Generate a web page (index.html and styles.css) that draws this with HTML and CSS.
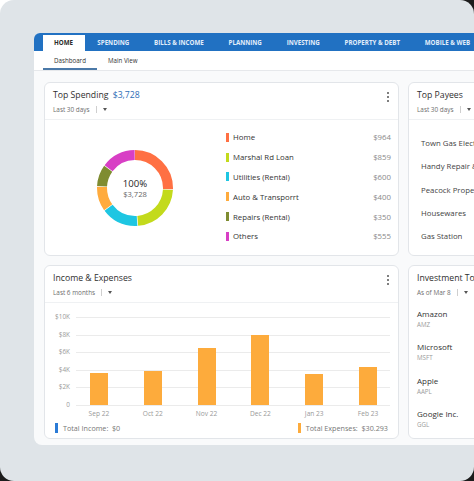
FILE: index.html
```html
<!DOCTYPE html>
<html lang="en">
<head>
<meta charset="utf-8">
<title>Dashboard</title>
<link rel="stylesheet" href="styles.css">
</head>
<body>
<div class="frame">
  <div class="panel">
    <nav class="tabs">
      <span class="tab active">HOME</span>
      <span class="tab">SPENDING</span>
      <span class="tab">BILLS &amp; INCOME</span>
      <span class="tab">PLANNING</span>
      <span class="tab">INVESTING</span>
      <span class="tab">PROPERTY &amp; DEBT</span>
      <span class="tab">MOBILE &amp; WEB</span>
    </nav>
    <div class="subtabs">
      <span class="subtab active">Dashboard</span>
      <span class="subtab">Main View</span>
    </div>
    <div class="grid">
      <section class="card">
        <header class="card-head">
          <div>
            <div class="title">Top Spending <span class="amount">$3,728</span></div>
            <div class="range">Last 30 days<span class="pipe"></span><span class="caret"></span></div>
          </div>
          <span class="kebab"><i></i><i></i><i></i></span>
        </header>
        <div class="spend-body">
          <div class="donut-cell">
            <svg class="donut" width="78" height="78" viewBox="0 0 78 78">
              <g transform="rotate(-90 39 39)" fill="none" stroke-width="10">
                <circle cx="39" cy="39" r="33" stroke="#ff7043" stroke-dasharray="52.9 207.35" stroke-dashoffset="0"/>
                <circle cx="39" cy="39" r="33" stroke="#c3da1c" stroke-dasharray="47.1 207.35" stroke-dashoffset="-53.62"/>
                <circle cx="39" cy="39" r="33" stroke="#1ec6e2" stroke-dasharray="32.7 207.35" stroke-dashoffset="-101.4"/>
                <circle cx="39" cy="39" r="33" stroke="#ffab3d" stroke-dasharray="21.6 207.35" stroke-dashoffset="-134.77"/>
                <circle cx="39" cy="39" r="33" stroke="#7f8c31" stroke-dasharray="18.8 207.35" stroke-dashoffset="-157.02"/>
                <circle cx="39" cy="39" r="33" stroke="#d83fc5" stroke-dasharray="30.2 207.35" stroke-dashoffset="-176.49"/>
              </g>
              <text class="pct" x="39" y="38" text-anchor="middle">100%</text>
              <text class="tot" x="39" y="47.5" text-anchor="middle">$3,728</text>
            </svg>
          </div>
          <ul class="legend">
            <li><i class="sw c-home"></i><span class="lab">Home</span><span class="val">$964</span></li>
            <li><i class="sw c-loan"></i><span class="lab">Marshal Rd Loan</span><span class="val">$859</span></li>
            <li><i class="sw c-util"></i><span class="lab">Utilities (Rental)</span><span class="val">$600</span></li>
            <li><i class="sw c-auto"></i><span class="lab">Auto &amp; Transporrt</span><span class="val">$400</span></li>
            <li><i class="sw c-rep"></i><span class="lab">Repairs (Rental)</span><span class="val">$350</span></li>
            <li><i class="sw c-oth"></i><span class="lab">Others</span><span class="val">$555</span></li>
          </ul>
        </div>
      </section>

      <section class="card">
        <header class="card-head">
          <div>
            <div class="title">Top Payees</div>
            <div class="range">Last 30 days<span class="pipe"></span><span class="caret"></span></div>
          </div>
        </header>
        <ul class="payees">
          <li>Town Gas Electric</li>
          <li>Handy Repair &amp; Co</li>
          <li>Peacock Properties</li>
          <li>Housewares</li>
          <li>Gas Station</li>
        </ul>
      </section>

      <section class="card">
        <header class="card-head">
          <div>
            <div class="title">Income &amp; Expenses</div>
            <div class="range">Last 6 months<span class="pipe"></span><span class="caret"></span></div>
          </div>
          <span class="kebab"><i></i><i></i><i></i></span>
        </header>
        <div class="chart">
          <div class="yaxis">
            <span>$10K</span><span>$8K</span><span>$6K</span><span>$4K</span><span>$2K</span><span>0</span>
          </div>
          <div class="plot">
            <div class="bars">
              <div class="slot"><div class="bar" style="height:36%"></div></div>
              <div class="slot"><div class="bar" style="height:38%"></div></div>
              <div class="slot"><div class="bar" style="height:64.5%"></div></div>
              <div class="slot"><div class="bar" style="height:79.5%"></div></div>
              <div class="slot"><div class="bar" style="height:35%"></div></div>
              <div class="slot"><div class="bar" style="height:43%"></div></div>
            </div>
          </div>
          <div class="xaxis">
            <span>Sep 22</span><span>Oct 22</span><span>Nov 22</span><span>Dec 22</span><span>Jan 23</span><span>Feb 23</span>
          </div>
        </div>
        <div class="chart-legend">
          <span class="key"><i class="kbar income"></i>Total Income:&nbsp; $0</span>
          <span class="key"><i class="kbar expense"></i>Total Expenses:&nbsp; $30.293</span>
        </div>
      </section>

      <section class="card">
        <header class="card-head plain">
          <div>
            <div class="title">Investment Tools</div>
            <div class="range">As of Mar 8<span class="pipe"></span><span class="caret"></span></div>
          </div>
        </header>
        <ul class="stocks">
          <li><span class="name">Amazon</span><span class="tick">AMZ</span></li>
          <li><span class="name">Microsoft</span><span class="tick">MSFT</span></li>
          <li><span class="name">Apple</span><span class="tick">AAPL</span></li>
          <li><span class="name">Google Inc.</span><span class="tick">GGL</span></li>
        </ul>
      </section>
    </div>
  </div>
</div>
</body>
</html>
```

FILE: styles.css
```css
html, body {
  margin: 0;
  padding: 0;
  width: 474px;
  height: 481px;
  overflow: hidden;
}
body {
  background: linear-gradient(to bottom right, #ffffff 0%, #ffffff 10%, #1c1c1c 30%);
  font-family: "Open Sans", "Liberation Sans", sans-serif;
  color: #333;
}
ul { list-style: none; margin: 0; padding: 0; }

.frame {
  width: 474px;
  height: 481px;
  box-sizing: border-box;
  border-radius: 14px;
  background: #dfe4e8;
  overflow: hidden;
  padding: 33px 0 0 34px;
}
.panel {
  width: 520px;
  height: 412px;
  background: #f9fafb;
  border-radius: 6px 0 0 8px;
  overflow: hidden;
}

/* main tabs */
.tabs {
  display: flex;
  align-items: flex-end;
  height: 18px;
  background: #2171c2;
  padding-left: 9px;
  white-space: nowrap;
}
.tab {
  height: 16px;
  line-height: 15px;
  padding: 0 12.4px;
  font-size: 6.2px;
  font-weight: 700;
  color: #e3eefa;
}
.tab.active {
  background: #fff;
  color: #2a2a2a;
  padding: 0 12px 0 11px;
}

/* sub tabs */
.subtabs {
  display: flex;
  height: 20px;
  background: #fff;
  border-bottom: 1px solid #e6e8eb;
  padding-left: 9px;
  box-sizing: border-box;
}
.subtab {
  padding: 0 10px 0 11px;
  line-height: 19px;
  font-size: 6.2px;
  color: #333;
}
.subtab.active {
  border-bottom: 2px solid #4b79a8;
  padding-right: 11px;
}

/* grid of cards */
.grid {
  display: grid;
  grid-template-columns: 355px 150px;
  grid-template-rows: 174px 174px;
  gap: 9px;
  padding: 11px 0 0 10px;
}
.card {
  background: #fff;
  border: 1px solid #e2e5e9;
  border-radius: 6px;
  box-sizing: border-box;
  overflow: hidden;
  display: flex;
  flex-direction: column;
}
.card-head {
  height: 37px;
  box-sizing: border-box;
  flex: none;
  padding: 6px 9px 0 8px;
  border-bottom: 1px solid #eff1f3;
  display: flex;
  justify-content: space-between;
  align-items: flex-start;
  white-space: nowrap;
}
.card-head.plain { border-bottom: none; }
.title {
  font-size: 8.7px;
  line-height: 13px;
  color: #2f2f2f;
}
.amount { color: #2d6db6; margin-left: 2px; }
.range {
  display: flex;
  align-items: center;
  margin-top: 2px;
  height: 10px;
  font-size: 6.4px;
  color: #6d6d6d;
}
.pipe {
  width: 1px;
  height: 7px;
  background: #cfcfcf;
  margin-left: 6px;
}
.caret {
  width: 0;
  height: 0;
  border-left: 2.5px solid transparent;
  border-right: 2.5px solid transparent;
  border-top: 3px solid #555;
  margin-left: 6px;
}
.kebab {
  display: flex;
  flex-direction: column;
  gap: 2px;
  padding-top: 3px;
}
.kebab i {
  display: block;
  width: 2px;
  height: 2px;
  border-radius: 50%;
  background: #555;
}

/* top spending */
.spend-body {
  flex: 1;
  display: flex;
}
.donut-cell {
  width: 180px;
  display: flex;
  align-items: center;
  justify-content: center;
}
.donut .pct { font-size: 9.6px; font-weight: 500; fill: #1f1f1f; font-family: "Open Sans", sans-serif; }
.donut .tot { font-size: 7.6px; fill: #666; font-family: "Open Sans", sans-serif; }
.legend {
  flex: 1;
  padding: 7.5px 7px 0 1px;
}
.legend li {
  display: flex;
  align-items: center;
  height: 19.8px;
  font-size: 7.8px;
  color: #333;
}
.sw {
  width: 2.5px;
  height: 9px;
  margin-right: 4.5px;
}
.lab { flex: 1; }
.val { color: #8a8a8a; }
.c-home { background: #ff7043; }
.c-loan { background: #c3da1c; }
.c-util { background: #1ec6e2; }
.c-auto { background: #ffab3d; }
.c-rep { background: #7f8c31; }
.c-oth { background: #d83fc5; }

/* payees */
.payees {
  padding: 12px 0 0 12px;
  white-space: nowrap;
}
.payees li {
  height: 23.3px;
  line-height: 23.3px;
  font-size: 7.8px;
  color: #444;
}

/* chart */
.chart {
  display: grid;
  grid-template-columns: 25px 323px;
  grid-template-rows: 89px 14px;
  column-gap: 2px;
  padding-top: 14px;
}
.yaxis {
  grid-column: 1;
  grid-row: 1;
  margin-top: -8.75px;
  height: 105px;
  display: flex;
  flex-direction: column;
}
.yaxis span {
  height: 17.5px;
  line-height: 17.5px;
  text-align: right;
  font-size: 6.4px;
  color: #9a9a9a;
}
.plot {
  grid-column: 2;
  grid-row: 1;
  background-image: repeating-linear-gradient(to bottom, #ebebeb 0, #ebebeb 1px, transparent 1px, transparent 17.5px);
  background-size: 314px 89px;
  background-position: 4px 0;
  background-repeat: no-repeat;
}
.bars {
  display: flex;
  align-items: flex-end;
  height: 87.5px;
}
.slot {
  flex: 1;
  height: 100%;
  display: flex;
  align-items: flex-end;
  justify-content: center;
}
.bar {
  width: 18px;
  background: #fdab3c;
}
.xaxis {
  grid-column: 2;
  grid-row: 2;
  display: flex;
}
.xaxis span {
  flex: 1;
  text-align: center;
  line-height: 15px;
  font-size: 6.6px;
  color: #999;
}
.chart-legend {
  display: flex;
  justify-content: space-between;
  align-items: center;
  height: 15px;
  padding: 0 10px;
  font-size: 7.2px;
  color: #777;
}
.key { display: flex; align-items: center; }
.kbar {
  width: 3px;
  height: 10px;
  margin-right: 5px;
}
.kbar.income { background: #2b7bd6; }
.kbar.expense { background: #fdab3c; }

/* investments */
.stocks {
  padding: 4.5px 0 0 8px;
  white-space: nowrap;
}
.stocks li {
  height: 33.5px;
  display: flex;
  flex-direction: column;
}
.stocks .name {
  font-size: 8px;
  line-height: 11px;
  color: #333;
}
.stocks .tick {
  font-size: 6.2px;
  line-height: 9px;
  margin-top: 1px;
  color: #9a9a9a;
}
```
